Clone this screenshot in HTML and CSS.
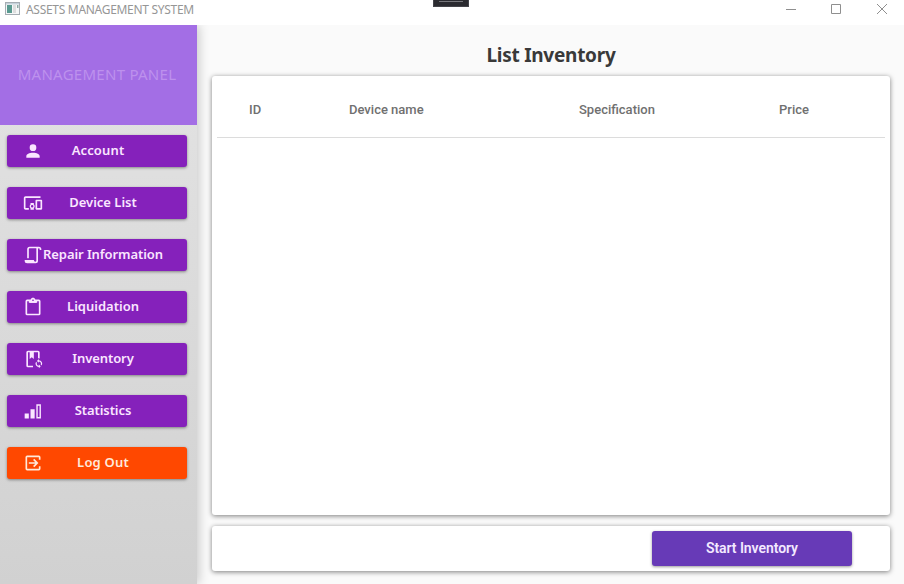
FILE: index.html
```html
<!DOCTYPE html>
<html lang="en">
<head>
<meta charset="utf-8">
<title>ASSETS MANAGEMENT SYSTEM</title>
<link rel="stylesheet" href="styles.css">
</head>
<body>
<header class="titlebar">
  <svg class="app-icon" width="16" height="14" viewBox="0 0 16 14">
    <rect x=".5" y=".5" width="14" height="12" fill="#f5f7f7" stroke="#a6adb3"/>
    <rect x="1" y="1" width="13" height="1.500" fill="#c5d1d9"/>
    <rect x="2" y="3" width="5" height="8" fill="#5a9a90"/>
    <rect x="8" y="3" width="3" height="8" fill="#dedede"/>
    <rect x="12" y="3" width="1.500" height="3" fill="#8fa9a4"/>
  </svg>
  <span class="app-title">ASSETS MANAGEMENT SYSTEM</span>
  <svg class="window-controls" width="104" height="12" viewBox="0 0 104 12" fill="none" stroke="#8f8f8f">
    <path d="M1 6.500h10M46.500 1.500h9v9h-9zM92 1l10 10M102 1l-10 10"/>
  </svg>
  <div class="grip"></div>
</header>
<div class="shell">
  <aside class="sidebar">
    <div class="panel-title">MANAGEMENT PANEL</div>
    <nav>
      <button class="nav-item"><svg viewBox="0 0 24 24"><path d="M12 4a4 4 0 1 1 0 8 4 4 0 0 1 0-8m0 10c4.420 0 8 1.790 8 4v2H4v-2c0-2.210 3.580-4 8-4"/></svg><span class="label account">Account</span></button>
      <button class="nav-item"><svg viewBox="0 0 24 24"><path d="M3 6h18V4H3c-1.100 0-2 .9-2 2v12c0 1.100.9 2 2 2h4v-2H3zm10 6H9v1.780c-.61.550-1 1.330-1 2.220s.39 1.670 1 2.220V20h4v-1.780c.61-.55 1-1.340 1-2.220s-.39-1.670-1-2.220zm-2 5.500a1.500 1.500 0 1 1 0-3 1.500 1.500 0 0 1 0 3M22 8h-6c-.5 0-1 .5-1 1v10c0 .5.500 1 1 1h6c.5 0 1-.5 1-1V9c0-.5-.5-1-1-1m-1 10h-4v-8h4z"/></svg><span class="label">Device List</span></button>
      <button class="nav-item"><svg viewBox="0 0 24 24"><path d="M15 20a1 1 0 0 0 1-1V4H8a1 1 0 0 0-1 1v11H5V5a3 3 0 0 1 3-3h11a3 3 0 0 1 3 3v1h-2V5a1 1 0 0 0-2 0v14a3 3 0 0 1-3 3H5a3 3 0 0 1-3-3v-1h11a2 2 0 0 0 2 2"/></svg><span class="label tight">Repair Information</span></button>
      <button class="nav-item"><svg viewBox="0 0 24 24"><path d="M19 3h-4.180C14.400 1.840 13.300 1 12 1s-2.400.84-2.820 2H5a2 2 0 0 0-2 2v15a2 2 0 0 0 2 2h14a2 2 0 0 0 2-2V5a2 2 0 0 0-2-2m-7 0a1 1 0 1 1 0 2 1 1 0 0 1 0-2M7 7h10V5h2v15H5V5h2z"/><path d="M8 5h8v2H8z"/></svg><span class="label">Liquidation</span></button>
      <button class="nav-item"><svg viewBox="0 0 24 24"><path d="M12 20v2H6a2 2 0 0 1-2-2V4a2 2 0 0 1 2-2h12a2 2 0 0 1 2 2v7.300a7 7 0 0 0-2-.3V4h-5v8l-2.500-2.250L8 12V4H6v16z"/><path d="M19 12v1.500a4 4 0 0 1 3.330 6.220l-1.090-1.090A2.500 2.500 0 0 0 19 15v1.500L16.750 14.250zM19 23v-1.500a4 4 0 0 1-3.330-6.220l1.090 1.090A2.500 2.500 0 0 0 19 20v-1.500l2.250 2.250z"/></svg><span class="label tight">Inventory</span></button>
      <button class="nav-item"><svg viewBox="0 0 24 24"><path d="M2 15h5v6H2zM9 10h5v11H9zM16 4h5.500v17H16zm1.700 1.700v13.600h2.100V5.700z" fill-rule="evenodd"/></svg><span class="label tight">Statistics</span></button>
      <button class="nav-item logout"><svg viewBox="0 0 24 24"><path d="M5 3h14a2 2 0 0 1 2 2v3h-2V5H5v14h14v-3h2v3a2 2 0 0 1-2 2H5a2 2 0 0 1-2-2V5a2 2 0 0 1 2-2M13.500 7l5 5-5 5-1.400-1.400 2.600-2.600H7v-2h7.700l-2.600-2.600z"/></svg><span class="label wide">Log Out</span></button>
    </nav>
  </aside>
  <main>
    <h1>List Inventory</h1>
    <section class="card table-card">
      <div class="table-head"><span>ID</span><span>Device name</span><span>Specification</span><span>Price</span></div>
    </section>
    <section class="card action-card"><button class="start">Start Inventory</button></section>
  </main>
</div>
</body>
</html>
```
FILE: styles.css
```css
* { box-sizing: border-box; }
body {
  margin: 0;
  width: 904px;
  height: 584px;
  overflow: hidden;
  background: #fafafa;
  font-family: "Noto Sans", "Open Sans", sans-serif;
}
button { border: 0; font-family: inherit; }
.titlebar {
  position: relative;
  display: flex;
  height: 25px;
  padding-left: 5px;
  background: #fff;
}
.app-icon { margin-top: 2px; }
.app-title {
  margin: 1px 0 0 5px;
  font-size: 12px;
  line-height: 17px;
  letter-spacing: -.3px;
  color: #969696;
  white-space: nowrap;
}
.window-controls { margin: 3px 15px 0 auto; }
.grip {
  position: absolute;
  top: 0;
  left: 433px;
  width: 36px;
  height: 7px;
  padding: 1px 5px;
  background: #2b2b30;
  border: 1px solid #44444a;
  border-top: 0;
}
.grip::before { content: ""; display: block; height: 1px; background: #77777c; }
.shell { display: flex; height: 559px; }
.sidebar {
  width: 197px;
  background: linear-gradient(#e4e4e4, #d1d1d1);
  box-shadow: 2px 0 10px rgba(0, 0, 0, .2);
}
.panel-title {
  display: flex;
  align-items: center;
  justify-content: center;
  height: 100px;
  padding: 0 3px 2px 0;
  background: #a36ee5;
  color: #bd91ed;
  font-size: 15px;
  letter-spacing: .27px;
  white-space: nowrap;
}
nav {
  display: flex;
  flex-direction: column;
  gap: 20px;
  padding: 10px 10px 0 7px;
}
.nav-item {
  display: grid;
  grid-template-columns: 52px 1fr;
  align-items: center;
  height: 32px;
  padding: 0;
  border-radius: 3px;
  background: #8521bb;
  color: #fae6ff;
  box-shadow: 0 1px 3px rgba(0, 0, 0, .4);
}
.nav-item svg {
  grid-area: 1 / 1;
  justify-self: center;
  width: 20px;
  height: 20px;
  fill: currentColor;
}
.label {
  grid-area: 1 / 1 / 2 / 3;
  justify-self: center;
  margin: -2px 0 0 12px;
  font-size: 13px;
  font-weight: 600;
  line-height: 20px;
  white-space: nowrap;
}
.account { margin-left: 2px; letter-spacing: .15px; }
.tight { letter-spacing: -.08px; }
.wide { letter-spacing: .2px; }
.logout { background: #ff4800; color: #ffe9da; }
main {
  display: flex;
  flex: 1;
  flex-direction: column;
  padding: 18px 14px 13px 15px;
}
h1 {
  height: 33px;
  margin: 0;
  font-size: 19px;
  line-height: 24px;
  font-weight: 700;
  letter-spacing: -.26px;
  color: #393939;
  text-align: center;
}
.card {
  border-radius: 3px;
  background: #fff;
  box-shadow: 0 1px 5px rgba(0, 0, 0, .5);
}
.table-card { height: 439px; padding: 0 5px; }
.table-head {
  display: grid;
  grid-template-columns: 100px 230px 200px 1fr;
  align-items: center;
  height: 62px;
  padding: 5px 0 0 32px;
  border-bottom: 1px solid #dcdcdc;
  font-family: Roboto, sans-serif;
  font-size: 13px;
  font-weight: 500;
  color: #707070;
}
.action-card {
  display: flex;
  justify-content: flex-end;
  height: 45px;
  margin-top: 11px;
  padding: 5px 38px 5px 0;
}
.start {
  width: 200px;
  height: 35px;
  padding: 0 0 1px;
  border-radius: 3px;
  background: #673ab7;
  box-shadow: 0 1px 3px rgba(0, 0, 0, .4);
  color: #f3e9ff;
  font-family: Roboto, sans-serif;
  font-size: 14px;
  font-weight: 600;
  letter-spacing: -.07px;
}
```
